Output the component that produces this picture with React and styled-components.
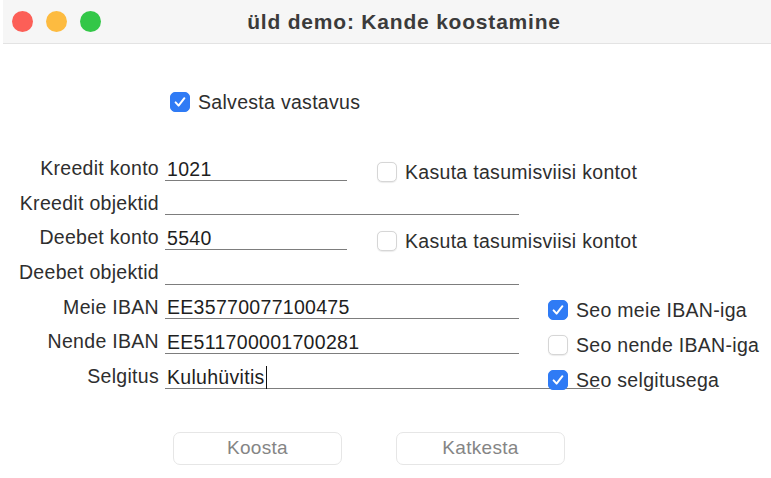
import React from 'react';
import styled, { createGlobalStyle } from 'styled-components';

const GlobalStyle = createGlobalStyle`
  html, body {
    margin: 0;
    padding: 0;
    background: #ffffff;
  }
  body {
    font-family: "Liberation Sans", Arial, sans-serif;
  }
`

const Window = styled.div`
  width: 771px;
  height: 478px;
  background: #ffffff;
  display: flex;
  flex-direction: column;
  overflow: hidden;
`

const TitleBar = styled.div`
  height: 43px;
  margin-left: 3px;
  background: #f6f6f6;
  border-bottom: 1px solid #e3e3e3;
  display: flex;
  align-items: center;
`

const Lights = styled.div`
  display: flex;
  gap: 13px;
  padding-left: 9px;
`

const Light = styled.span`
  width: 21px;
  height: 21px;
  border-radius: 50%;
  background: ${p => p.color};
`

const Title = styled.div`
  flex: 1;
  text-align: center;
  padding-right: 64px;
  font-size: 21px;
  font-weight: bold;
  letter-spacing: 0.8px;
  color: #3b3b3b;
`

const Content = styled.div`
  display: flex;
  flex-direction: column;
`

const SaveRow = styled.div`
  margin-top: 47px;
  padding-left: 170px;
  display: flex;
  align-items: center;
  gap: 8px;
  height: 22px;
`

const FormGrid = styled.div`
  margin-top: 33px;
  display: grid;
  grid-template-columns: 165px 182px 172px 1fr;
  grid-auto-rows: 34.67px;
`

const Label = styled.div`
  grid-column: 1;
  grid-row: ${p => p.$row};
  display: flex;
  align-items: flex-end;
  justify-content: flex-end;
  padding-right: 6px;
  padding-bottom: 1.5px;
  font-size: 19.5px;
  letter-spacing: 0.3px;
  line-height: 22px;
  color: #2e2e2e;
  white-space: nowrap;
`

const Field = styled.div`
  grid-column: ${p => p.$span};
  grid-row: ${p => p.$row};
  width: ${p => p.$width}px;
  display: flex;
  align-items: flex-end;
  border-bottom: 1.5px solid #7d7d7d;
  font-size: 19.5px;
  letter-spacing: 0.3px;
  line-height: 22px;
  color: #1e1e1e;
  padding-left: 2px;
  box-sizing: border-box;
  white-space: nowrap;
`

const Caret = styled.span`
  display: inline-block;
  width: 1.5px;
  height: 23px;
  margin-left: 1px;
  margin-bottom: -1px;
  background: #111111;
`

const CheckText = styled.span`
  font-size: 19.5px;
  letter-spacing: 0.3px;
  line-height: 22px;
  color: #2e2e2e;
  white-space: nowrap;
`

const CheckCell = styled.label`
  grid-column: ${p => p.$col};
  grid-row: ${p => p.$row};
  align-self: end;
  margin-bottom: -2px;
  padding-left: ${p => p.$indent}px;
  display: flex;
  align-items: center;
  gap: 8px;
  z-index: 1;
`

const Box = styled.span`
  width: 20px;
  height: 20px;
  box-sizing: border-box;
  border-radius: 5px;
  flex: none;
  display: flex;
  align-items: center;
  justify-content: center;
  background: ${p => (p.$checked ? '#2f7bf5' : '#ffffff')};
  border: 1px solid ${p => (p.$checked ? '#2f7bf5' : '#d6d6d6')};
  box-shadow: ${p => (p.$checked ? 'none' : '0 0.5px 1px rgba(0,0,0,0.08)')};
`

const ButtonRow = styled.div`
  margin-top: 43px;
  padding-left: 173px;
  display: flex;
  gap: 54px;
`

const Button = styled.button`
  width: 169px;
  height: 33px;
  background: #ffffff;
  border: 1px solid #e6e6e6;
  border-radius: 7px;
  font-family: "Liberation Sans", Arial, sans-serif;
  font-size: 19px;
  letter-spacing: 0.3px;
  color: #858585;
  padding: 0;
`

const Checkbox = ({ checked }) => (
  <Box $checked={checked}>
    {checked && (
      <svg width="14" height="14" viewBox="0 0 14 14">
        <path d="M2.6 7.4 L5.6 10.6 L11.4 3.2" fill="none" stroke="#ffffff" strokeWidth="2" strokeLinecap="round" strokeLinejoin="round" />
      </svg>
    )}
  </Box>
)

const rows = [
  { label: 'Kreedit konto', value: '1021', width: 182, span: '2 / 3', check: { text: 'Kasuta tasumisviisi kontot', col: 3, indent: 30 } },
  { label: 'Kreedit objektid', value: '', width: 354, span: '2 / 4' },
  { label: 'Deebet konto', value: '5540', width: 182, span: '2 / 3', check: { text: 'Kasuta tasumisviisi kontot', col: 3, indent: 30 } },
  { label: 'Deebet objektid', value: '', width: 354, span: '2 / 4' },
  { label: 'Meie IBAN', value: 'EE35770077100475', width: 354, span: '2 / 4', check: { text: 'Seo meie IBAN-iga', col: 4, indent: 29, checked: true } },
  { label: 'Nende IBAN', value: 'EE511700001700281', width: 354, span: '2 / 4', check: { text: 'Seo nende IBAN-iga', col: 4, indent: 29 } },
  { label: 'Selgitus', value: 'Kuluhüvitis', width: 435, span: '2 / 5', caret: true, check: { text: 'Seo selgitusega', col: 4, indent: 29, checked: true } },
]

const App = () => {
  return (
    <Window>
      <GlobalStyle />
      <TitleBar>
        <Lights>
          <Light color="#fc5f57" />
          <Light color="#fdbb40" />
          <Light color="#33c748" />
        </Lights>
        <Title>üld demo: Kande koostamine</Title>
      </TitleBar>
      <Content>
        <SaveRow>
          <Checkbox checked />
          <CheckText>Salvesta vastavus</CheckText>
        </SaveRow>
        <FormGrid>
          {rows.map((r, i) => (
            <React.Fragment key={r.label}>
              <Label $row={i + 1}>{r.label}</Label>
              <Field $row={i + 1} $span={r.span} $width={r.width}>
                {r.value}
                {r.caret && <Caret />}
              </Field>
              {r.check && (
                <CheckCell $row={i + 1} $col={r.check.col} $indent={r.check.indent}>
                  <Checkbox checked={r.check.checked} />
                  <CheckText>{r.check.text}</CheckText>
                </CheckCell>
              )}
            </React.Fragment>
          ))}
        </FormGrid>
        <ButtonRow>
          <Button>Koosta</Button>
          <Button>Katkesta</Button>
        </ButtonRow>
      </Content>
    </Window>
  );
};

export default App;
